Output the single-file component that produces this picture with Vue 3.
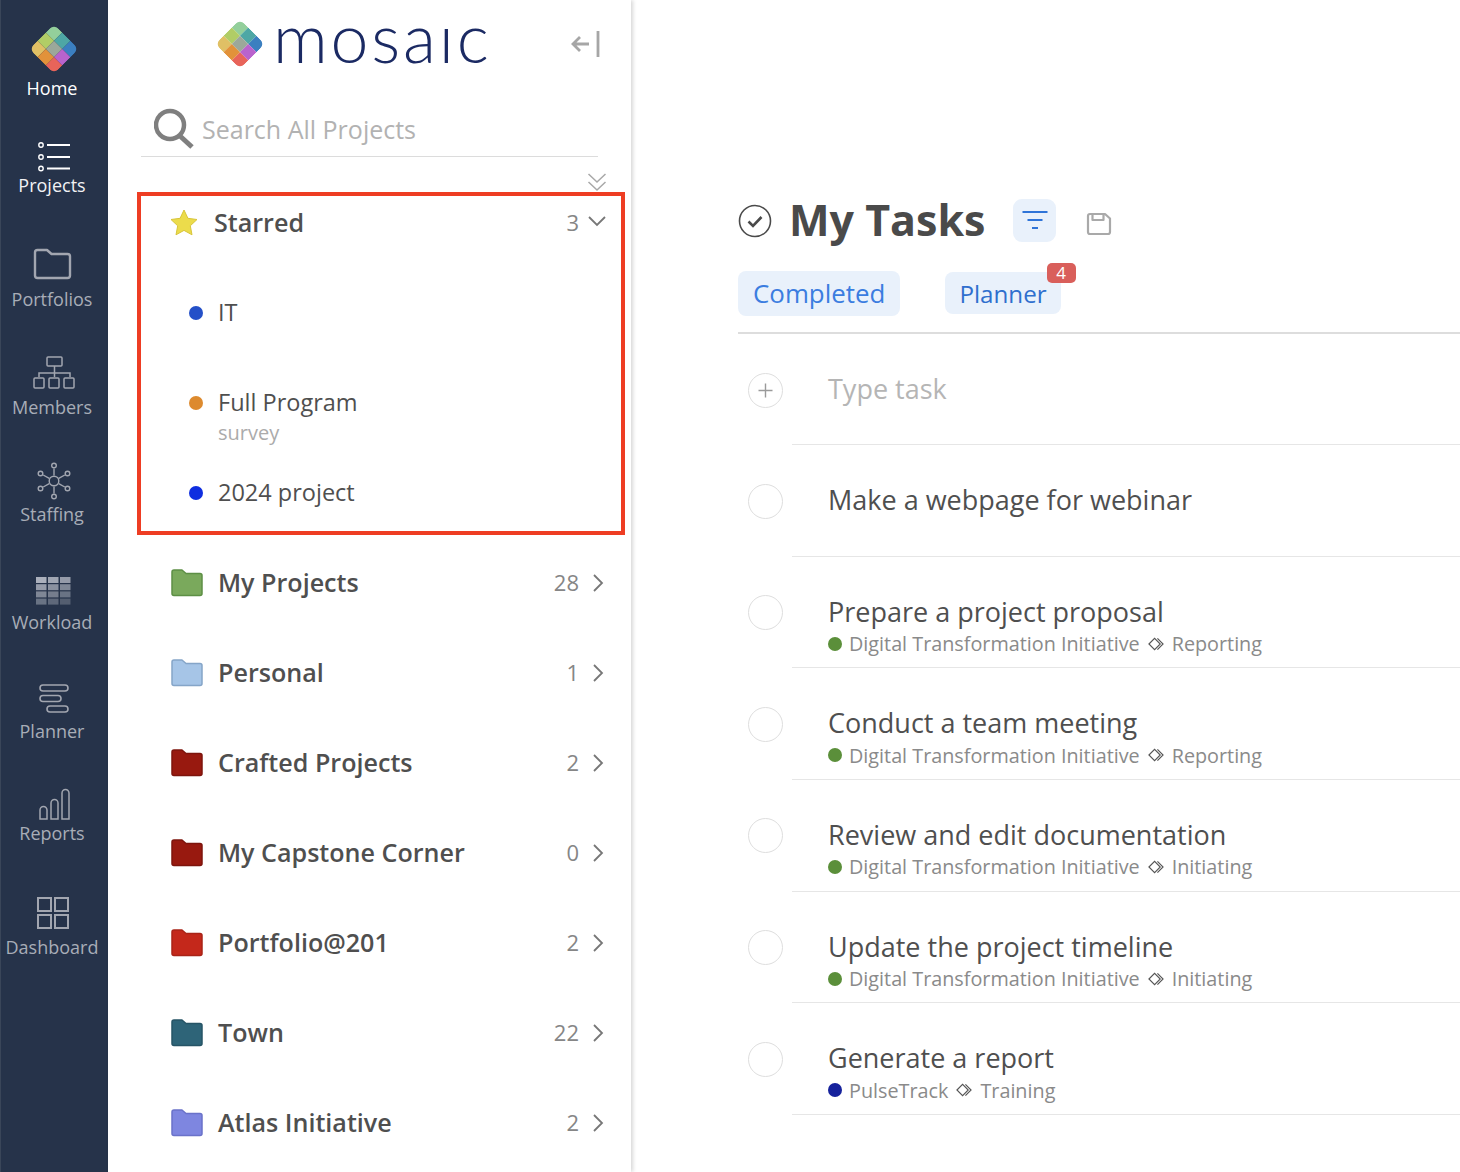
<script setup>
const tiles = [
  ['#93cf9b', '#4ea7a5', '#3b7fc0'],
  ['#b1cd66', '#9ca89a', '#b963cd'],
  ['#e0c065', '#e2923a', '#e8645a'],
].flatMap((row, r) => row.map((fill, c) => ({ fill, x: -17.500 + c * 11.67, y: -17.500 + r * 11.67 })))

const nav = [
  { key: 'home', label: 'Home', h: 98, on: true },
  { key: 'projects', label: 'Projects', h: 97, on: true },
  { key: 'portfolios', label: 'Portfolios', h: 114 },
  { key: 'members', label: 'Members', h: 108 },
  { key: 'staffing', label: 'Staffing', h: 107 },
  { key: 'workload', label: 'Workload', h: 108 },
  { key: 'planner', label: 'Planner', h: 109 },
  { key: 'reports', label: 'Reports', h: 102 },
  { key: 'dashboard', label: 'Dashboard', h: 114 },
]

const workload = [0, 1, 2, 3].flatMap(r => [0, 1, 2].map(c => ({ x: c * 12, y: r * 7.2, o: 0.85 - r * 0.14 - c * 0.07 })))

const staffNodes = [[0, -15.5], [13.5, -7.5], [13.5, 7.5], [0, 15.5], [-13.5, 7.5], [-13.5, -7.5]]

const folders = [
  { name: 'My Projects', count: 28, fill: '#7aa95c', line: '#5d8f45' },
  { name: 'Personal', count: 1, fill: '#a6c5e7', line: '#85a5c8' },
  { name: 'Crafted Projects', count: 2, fill: '#98190f', line: '#7d140c' },
  { name: 'My Capstone Corner', count: 0, fill: '#98190f', line: '#7d140c' },
  { name: 'Portfolio@201', count: 2, fill: '#c4281b', line: '#a92317' },
  { name: 'Town', count: 22, fill: '#2e6478', line: '#265466' },
  { name: 'Atlas Initiative', count: 2, fill: '#7e86e0', line: '#6a72c9' },
]

const starred = [
  { name: 'IT', color: '#2450c8' },
  { name: 'Full Program', color: '#dd8a2e', sub: 'survey' },
  { name: '2024 project', color: '#0f2ee0' },
]

const tasks = [
  { title: 'Make a webpage for webinar' },
  { title: 'Prepare a project proposal', project: 'Digital Transformation Initiative', phase: 'Reporting', color: '#5b8f3a' },
  { title: 'Conduct a team meeting', project: 'Digital Transformation Initiative', phase: 'Reporting', color: '#5b8f3a' },
  { title: 'Review and edit documentation', project: 'Digital Transformation Initiative', phase: 'Initiating', color: '#5b8f3a' },
  { title: 'Update the project timeline', project: 'Digital Transformation Initiative', phase: 'Initiating', color: '#5b8f3a' },
  { title: 'Generate a report', project: 'PulseTrack', phase: 'Training', color: '#16229c' },
]
</script>

<template>
  <div class="page">
    <nav class="rail">
      <div v-for="n in nav" :key="n.key" class="rail-item" :class="[n.key, { on: n.on }]" :style="{ height: n.h + 'px' }">
        <svg v-if="n.key === 'home'" class="ico" width="48" height="48" viewBox="-24 -24 48 48">
          <g transform="rotate(45)" clip-path="url(#tileClipA)">
            <rect v-for="(t, i) in tiles" :key="i" :x="t.x" :y="t.y" width="11.67" height="11.67" :fill="t.fill" />
          </g>
          <defs><clipPath id="tileClipA"><rect x="-17.500" y="-17.500" width="35" height="35" rx="6" /></clipPath></defs>
        </svg>
        <svg v-else-if="n.key === 'projects'" class="ico" width="40" height="34" viewBox="0 0 40 34" fill="none" stroke="#fff">
          <circle cx="7" cy="4" r="2.2" stroke-width="1.4" /><circle cx="7" cy="16" r="2.2" stroke-width="1.4" /><circle cx="7" cy="27.500" r="2.2" stroke-width="1.4" />
          <path d="M13 4h23M13 16h23M13 27.500h23" stroke-width="2" />
        </svg>
        <svg v-else-if="n.key === 'portfolios'" class="ico" width="42" height="34" viewBox="0 0 42 34" fill="none" stroke="#a2a6b0" stroke-width="2.400">
          <path d="M4 5.500q0-2.500 2.500-2.500h9.500l4.500 4h16q2.500 0 2.500 2.500v19q0 2.500-2.500 2.500h-30q-2.500 0-2.500-2.500z" stroke-linejoin="round" />
        </svg>
        <svg v-else-if="n.key === 'members'" class="ico" width="44" height="34" viewBox="0 0 44 34" fill="none" stroke="#a2a6b0" stroke-width="1.500">
          <rect x="15" y="1" width="15" height="9" rx="1" />
          <path d="M22.500 10v11M7 21v-4h31v4" />
          <rect x="2" y="22" width="10" height="10" rx="1" /><rect x="17" y="22" width="10" height="10" rx="1" /><rect x="32" y="22" width="10" height="10" rx="1" />
        </svg>
        <svg v-else-if="n.key === 'staffing'" class="ico" width="34" height="38" viewBox="-17 -19 34 38" fill="none" stroke="#a2a6b0" stroke-width="1.400">
          <circle r="4.800" />
          <g v-for="(p, i) in staffNodes" :key="i">
            <path :d="`M${p[0] * 0.35} ${p[1] * 0.35}L${p[0] * 0.8} ${p[1] * 0.8}`" />
            <circle :cx="p[0]" :cy="p[1]" r="2.300" />
          </g>
        </svg>
        <svg v-else-if="n.key === 'workload'" class="ico" width="36" height="30" viewBox="0 0 36 30" fill="#c3c7d0">
          <rect v-for="(w, i) in workload" :key="i" :x="w.x" :y="w.y" width="10.500" height="6" :opacity="w.o" />
        </svg>
        <svg v-else-if="n.key === 'planner'" class="ico" width="32" height="30" viewBox="0 0 32 30" fill="none" stroke="#a2a6b0" stroke-width="1.600">
          <rect x="2" y="1" width="28" height="6" rx="3" /><rect x="2" y="11.500" width="21" height="6" rx="3" /><rect x="9" y="22" width="21" height="6" rx="3" />
        </svg>
        <svg v-else-if="n.key === 'reports'" class="ico" width="32" height="32" viewBox="0 0 32 32" fill="none" stroke="#a2a6b0" stroke-width="1.500">
          <path d="M2 31v-9a3.500 3.500 0 0 1 7 0v9zM13 31v-16a3.500 3.500 0 0 1 7 0v16zM24 31v-26a3.500 3.500 0 0 1 7 0v26z" />
        </svg>
        <svg v-else class="ico" width="34" height="34" viewBox="0 0 34 34" fill="none" stroke="#a2a6b0" stroke-width="2">
          <rect x="2" y="2" width="13" height="13" /><rect x="19" y="2" width="13" height="13" /><rect x="2" y="19" width="13" height="13" /><rect x="19" y="19" width="13" height="13" />
        </svg>
        <span class="rail-label">{{ n.label }}</span>
      </div>
    </nav>

    <aside class="panel">
      <header class="brand">
        <svg width="48" height="48" viewBox="-24 -24 48 48">
          <g transform="rotate(45)" clip-path="url(#tileClipB)">
            <rect v-for="(t, i) in tiles" :key="i" :x="t.x" :y="t.y" width="11.67" height="11.67" :fill="t.fill" />
          </g>
          <defs><clipPath id="tileClipB"><rect x="-17.500" y="-17.500" width="35" height="35" rx="6" /></clipPath></defs>
        </svg>
        <span class="wordmark">mosaıc</span>
        <svg class="collapse" width="30" height="30" viewBox="0 0 30 30" fill="none" stroke="#a6a6a6" stroke-width="2.800">
          <path d="M19 15H3M10 8l-7 7 7 7M28 2v26" />
        </svg>
      </header>

      <div class="search">
        <svg width="42" height="44" viewBox="0 0 42 44" fill="none" stroke="#7f7f7f">
          <circle cx="16" cy="19" r="14" stroke-width="4.500" />
          <path d="M26 30l12 11" stroke-width="5" />
        </svg>
        <span class="search-text">Search All Projects</span>
      </div>

      <div class="expand">
        <svg width="20" height="20" viewBox="0 0 20 20" fill="none" stroke="#a8a8a8" stroke-width="1.500">
          <path d="M1.500 2l8.500 8 8.500-8M1.500 10l8.500 8 8.500-8" />
        </svg>
      </div>

      <section class="starred">
        <div class="star-head">
          <svg class="star" width="30" height="30" viewBox="0 0 30 30">
            <path d="M15 2l3.900 8.300 9.100 1.200-6.700 6.300 1.700 9L15 22.400 7 26.800l1.700-9L2 11.500l9.100-1.200z" fill="#ecdc4b" stroke="#d8c53a" stroke-width="1" stroke-linejoin="round" />
          </svg>
          <span class="star-title">Starred</span>
          <span class="count">3</span>
          <svg class="chev-down" width="20" height="12" viewBox="0 0 20 12" fill="none" stroke="#777" stroke-width="1.800">
            <path d="M2 2l8 8 8-8" />
          </svg>
        </div>
        <div v-for="s in starred" :key="s.name" class="star-row">
          <span class="dot" :style="{ background: s.color }"></span>
          <div>
            <div class="star-name">{{ s.name }}</div>
            <div v-if="s.sub" class="star-sub">{{ s.sub }}</div>
          </div>
        </div>
      </section>

      <div class="folders">
        <div v-for="f in folders" :key="f.name" class="folder-row">
          <svg width="34" height="30" viewBox="0 0 34 30">
            <path d="M2 4q0-2 2-2h8l4 3.500h14q2 0 2 2v18q0 2-2 2H4q-2 0-2-2z" :fill="f.fill" :stroke="f.line" stroke-width="1.500" stroke-linejoin="round" />
          </svg>
          <span class="folder-name">{{ f.name }}</span>
          <span class="count">{{ f.count }}</span>
          <svg class="chev-right" width="12" height="20" viewBox="0 0 12 20" fill="none" stroke="#777" stroke-width="1.800">
            <path d="M2 2l8 8-8 8" />
          </svg>
        </div>
      </div>
    </aside>

    <main class="main">
      <div class="title-row">
        <svg width="34" height="34" viewBox="0 0 34 34" fill="none" stroke="#4a4a4a">
          <circle cx="17" cy="17" r="15.500" stroke-width="1.600" />
          <path d="M10.500 17.500l4.500 4.500 8.500-9" stroke-width="2.600" />
        </svg>
        <h1 class="title">My Tasks</h1>
        <div class="filter-btn">
          <svg width="28" height="20" viewBox="0 0 28 20" fill="none" stroke="#2f74d8" stroke-width="2">
            <path d="M1.500 2h25M6.500 10h15M11 18h6" />
          </svg>
        </div>
        <svg class="save" width="26" height="24" viewBox="0 0 26 24" fill="none" stroke="#a9a9a9" stroke-width="2.200">
          <path d="M2 4q0-2 2-2h15l5 4.500V20q0 2-2 2H4q-2 0-2-2zM6.500 2.500V8h11V2.500" stroke-linejoin="round" />
        </svg>
      </div>

      <div class="tabs">
        <span class="tab tab-completed">Completed</span>
        <span class="tab tab-planner">Planner<span class="badge">4</span></span>
      </div>

      <div class="task add-row">
        <div class="circle">
          <svg width="35" height="35" viewBox="0 0 35 35" fill="none" stroke="#9a9a9a" stroke-width="1.400">
            <path d="M17.500 10.500v14M10.500 17.500h14" />
          </svg>
        </div>
        <div class="task-body"><div class="placeholder">Type task</div></div>
      </div>

      <div v-for="t in tasks" :key="t.title" class="task">
        <div class="circle"></div>
        <div class="task-body">
          <div class="task-title">{{ t.title }}</div>
          <div v-if="t.project" class="task-sub">
            <span class="dot small" :style="{ background: t.color }"></span>
            <span>{{ t.project }}</span>
            <svg width="16" height="14" viewBox="0 0 17 14" fill="none" stroke="#555" stroke-width="1.200">
              <path d="M1 7l6-6 6 6-6 6zM10 1l6 6-6 6" />
            </svg>
            <span>{{ t.phase }}</span>
          </div>
        </div>
      </div>
    </main>
  </div>
</template>

<style>
html, body { margin: 0; background: #fff; }
</style>

<style scoped>
.page {
  display: flex;
  width: 1460px;
  height: 1172px;
  overflow: hidden;
  font-family: "Open Sans", "Liberation Sans", sans-serif;
  background: #fff;
}
.rail {
  width: 108px;
  flex: none;
  background: #26334a;
  border-left: 1px solid #3a4659;
  box-sizing: border-box;
  padding-top: 3px;
}
.rail-item {
  display: flex;
  flex-direction: column;
  align-items: center;
  justify-content: flex-end;
  box-sizing: border-box;
  padding-right: 2px;
  color: #a8adb7;
}
.rail-item.on { color: #f1f2f4; }
.rail-item.home { color: #fff; }
.ico { flex: none; }
.home .ico { margin-bottom: 2px; }
.projects .ico { margin-bottom: -3px; }
.portfolios .ico { margin-bottom: 5px; margin-left: -3px; }
.members .ico { margin-bottom: 4px; }
.staffing .ico { margin-bottom: 1px; }
.workload .ico { margin-bottom: 2px; }
.planner .ico { margin-bottom: 4px; }
.dashboard .ico { margin-bottom: 4px; margin-left: -1px; }
.rail-label {
  font-size: 18px;
  line-height: 26px;
  white-space: nowrap;
  margin-left: -3px;
}

.panel {
  width: 523px;
  flex: none;
  box-shadow: 2px 0 4px rgba(0, 0, 0, 0.16);
  position: relative;
  z-index: 1;
  background: #fff;
}
.brand {
  height: 87px;
  display: flex;
  align-items: center;
  padding-left: 108px;
  box-sizing: border-box;
}
.wordmark {
  margin-left: 9px;
  margin-bottom: 14px;
  font-family: Lato, sans-serif;
  font-weight: 300;
  font-size: 68px;
  line-height: 70px;
  letter-spacing: 2.800px;
  color: #1b2a63;
}
.collapse { margin-left: auto; margin-right: 31px; }
.search {
  margin-left: 33px;
  width: 457px;
  height: 70px;
  box-sizing: border-box;
  border-bottom: 1px solid #dcdcdc;
  display: flex;
  align-items: center;
  padding-left: 13px;
}
.search svg { margin-top: 13px; }
.search-text {
  font-size: 25px;
  color: #b2b2b2;
  margin-left: 6px;
  margin-top: 14px;
}
.expand {
  height: 35px;
  display: flex;
  justify-content: flex-end;
  align-items: flex-end;
  padding-right: 24px;
  box-sizing: border-box;
}
.starred {
  margin-left: 29px;
  width: 488px;
  box-sizing: border-box;
  border: 4px solid #ee3d23;
  position: relative;
}
.star-head {
  height: 54px;
  margin-bottom: 18px;
  display: flex;
  align-items: center;
  padding-left: 28px;
  padding-right: 14px;
}
.star-title {
  margin-left: 15px;
  margin-top: -2px;
  font-size: 25.100px;
  font-weight: 600;
  color: #4f4f4f;
}
.count {
  margin-left: auto;
  margin-top: -2px;
  font-size: 22px;
  color: #868686;
}
.chev-down { margin-left: 8px; margin-top: -4px; }
.star-row {
  height: 90px;
  box-sizing: border-box;
  padding: 28px 0 0 48px;
  display: flex;
  align-items: flex-start;
}
.star-row:last-child { height: 83px; }
.dot {
  width: 14px;
  height: 14px;
  border-radius: 50%;
  flex: none;
  margin-top: 10px;
  margin-right: 15px;
}
.dot.small { margin: 0 7px 0 0; }
.star-name {
  font-size: 23.500px;
  line-height: 34px;
  margin: -1px 0 1px;
  color: #4f4f4f;
}
.star-sub {
  font-size: 20px;
  line-height: 26px;
  color: #ababab;
}
.folders { margin-top: 3px; }
.folder-row {
  height: 90px;
  display: flex;
  align-items: center;
  padding-left: 62px;
  padding-right: 27px;
}
.folder-name {
  margin-left: 14px;
  margin-top: -2px;
  font-size: 25.100px;
  font-weight: 600;
  color: #4f4f4f;
}
.chev-right { margin-left: 13px; }

.main {
  flex: 1;
  padding-left: 107px;
  min-width: 0;
}
.title-row {
  height: 86px;
  margin-top: 178px;
  display: flex;
  align-items: center;
}
.title {
  margin: -2px 0 0 17px;
  font-size: 43px;
  font-weight: 700;
  line-height: 60px;
  color: #4a4a4a;
}
.filter-btn {
  width: 43px;
  height: 43px;
  margin-left: 28px;
  margin-top: -2px;
  border-radius: 9px;
  background: #e9f1fb;
  display: flex;
  align-items: center;
  justify-content: center;
}
.save { margin-left: 30px; margin-top: 6px; }
.tabs {
  height: 61px;
  padding-top: 7px;
  display: flex;
  align-items: flex-start;
  border-bottom: 2px solid #dddddd;
}
.tab {
  position: relative;
  font-weight: 500;
  border-radius: 8px;
  background: #e9f1fb;
  white-space: nowrap;
}
.tab-completed { color: #3b7de0; font-size: 25.900px; height: 45px; line-height: 45px; padding: 0 15px; }
.tab-planner { color: #2f6fce; font-size: 24.200px; margin-left: 45px; margin-top: 1px; height: 42px; line-height: 44px; padding: 0 14px; }
.badge {
  position: absolute;
  right: -15px;
  top: -9px;
  width: 29px;
  height: 20px;
  border-radius: 5px;
  background: #d95f5b;
  color: #fff;
  font-size: 17px;
  font-weight: 500;
  line-height: 20px;
  text-align: center;
}
.task {
  height: 111.670px;
  display: flex;
}
.add-row { height: 111px; }
.circle {
  width: 35px;
  height: 35px;
  box-sizing: border-box;
  border: 1.500px solid #dedede;
  border-radius: 50%;
  margin: 38.500px 9px 0 10px;
  flex: none;
  display: flex;
  align-items: center;
  justify-content: center;
}
.circle svg { margin: -1.500px; flex: none; }
.task-body {
  flex: 1;
  border-bottom: 1px solid #e6e6e6;
  padding: 36px 0 0 36px;
  box-sizing: border-box;
}
.task-title, .placeholder {
  font-size: 27px;
  line-height: 38px;
  color: #4f4f4f;
  white-space: nowrap;
}
.placeholder { color: #b5b5b5; }
.task-sub {
  display: flex;
  align-items: center;
  height: 26px;
  font-size: 19.800px;
  color: #8a8a8a;
  white-space: nowrap;
}
.task-sub svg { margin: 0 8px; }
</style>
